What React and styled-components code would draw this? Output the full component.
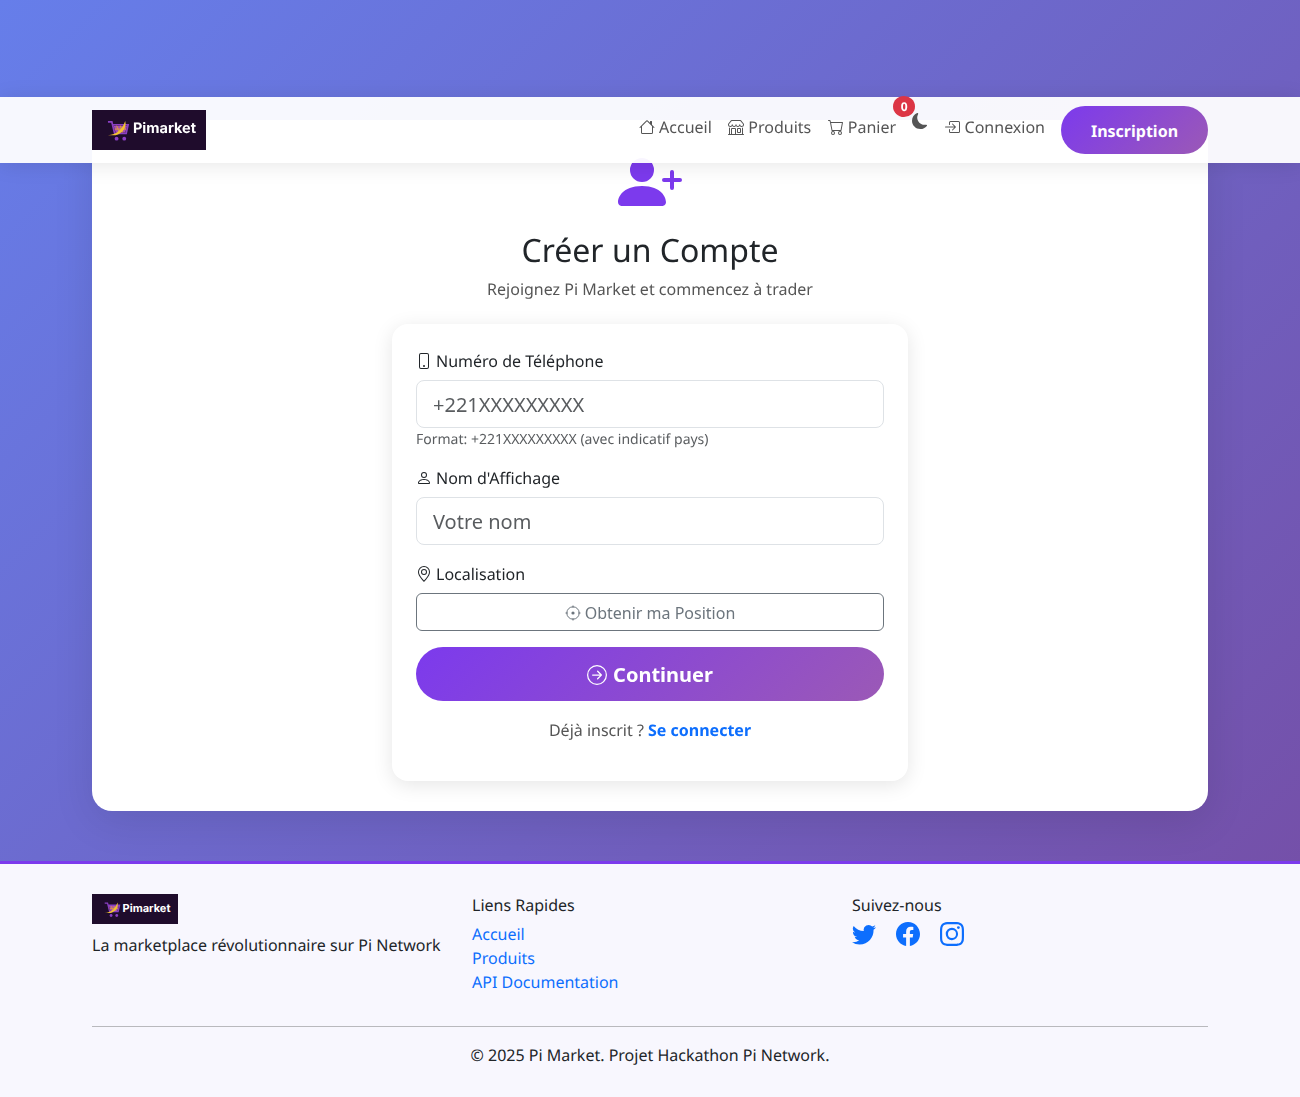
import React from "react";
import styled, { createGlobalStyle } from "styled-components";
import {
  BsHouse, BsShop, BsCart, BsMoonFill, BsBoxArrowInRight, BsPersonPlusFill, BsPhone,
  BsPerson, BsGeoAlt, BsArrowRightCircle, BsTwitter, BsFacebook, BsInstagram,
} from "react-icons/bs";

const Global = createGlobalStyle`
  * { box-sizing: border-box; }
  html, body { margin: 0; padding: 0; }
  body {
    font-family: "Noto Sans", sans-serif;
    font-size: 16px;
    line-height: 1.5;
    color: #212529;
    text-rendering: geometricPrecision;
    background: linear-gradient(135deg, #667eea 0%, #764ba2 100%);
  }
  #root { will-change: opacity; }
`;

const Hero = styled.main`
  position: relative;
  height: 861px;
  padding: 120px 92px 0;
`;

const Navbar = styled.header`
  position: absolute;
  z-index: 5;
  top: 97px;
  left: 0;
  right: 0;
  height: 66px;
  padding: 9px 92px;
  display: flex;
  justify-content: space-between;
  align-items: flex-start;
  background: rgba(255, 255, 255, 0.95);
  box-shadow: 0 2px 20px rgba(0, 0, 0, 0.1);
`;

const LogoBox = styled.div`
  display: flex;
  align-items: center;
  justify-content: center;
  gap: ${(p) => (p.$small ? 2 : 3)}px;
  width: ${(p) => (p.$small ? 86 : 114)}px;
  height: ${(p) => (p.$small ? 30 : 40)}px;
  margin-top: ${(p) => (p.$small ? 0 : 4)}px;
  padding-left: ${(p) => (p.$small ? 4 : 5)}px;
  background: #1f0c2c;
  color: #fff;
  font-family: "Inter", sans-serif;
  font-weight: 700;
  font-size: ${(p) => (p.$small ? 11 : 14.5)}px;
  line-height: 1;
  span { margin-bottom: 2px; }
`;

const Menu = styled.nav`
  display: flex;
  align-items: flex-start;
`;

const NavLink = styled.a`
  position: relative;
  display: flex;
  align-items: center;
  gap: 4.16px;
  height: 42px;
  padding: 0 8px;
  margin-right: ${(p) => p.$gap ?? 0.33}px;
  color: #555;
  white-space: nowrap;
  font-size: 16px;
  svg { flex: none; }
`;

const Badge = styled.span`
  position: absolute;
  top: -10px;
  right: -11px;
  width: 22px;
  height: 21px;
  border-radius: 50%;
  background: #dc3545;
  color: #fff;
  font-size: 12px;
  font-weight: 700;
  line-height: 21px;
  text-align: center;
`;

const ThemeToggle = styled.span`
  display: block;
  height: 42px;
  padding: 0 8px;
  color: #555;
  svg { display: block; margin-top: 7px; }
`;

const RegisterButton = styled.a`
  width: 147px;
  height: 48px;
  margin-left: 8px;
  border-radius: 24px;
  background: linear-gradient(135deg, #7c3aed 0%, #9b59b6 100%);
  color: #fff;
  font-weight: 700;
  text-align: center;
  line-height: 50px;
`;

const Card = styled.section`
  height: 691px;
  padding: 30px 0 0;
  border-radius: 20px;
  background: #fff;
  box-shadow: 0 10px 40px rgba(0, 0, 0, 0.1);
`;

const Head = styled.div`
  text-align: center;
`;

const HeadIcon = styled.div`
  height: 81px;
  color: #7c3aed;
  svg { display: block; margin: 0 auto; }
`;

const Title = styled.h2`
  margin: 0 0 7.5px;
  padding-top: 0.5px;
  font-size: 32px;
  font-weight: 400;
  line-height: 1.2;
`;

const Subtitle = styled.p`
  margin: 0 0 23px;
  color: #555;
`;

const FormCard = styled.form`
  width: 516px;
  margin: 0 auto;
  padding: 24px;
  border-radius: 16px;
  background: #fff;
  box-shadow: 0 4px 20px rgba(0, 0, 0, 0.1);
`;

const Field = styled.div`
  margin-bottom: 16px;
`;

const Label = styled.label`
  display: flex;
  align-items: center;
  gap: 4px;
  height: 24px;
  padding-top: 2px;
  margin-bottom: 8px;
`;

const TextInput = styled.input`
  display: block;
  width: 100%;
  height: 48px;
  padding: 8px 16px;
  border: 1px solid #dee2e6;
  border-radius: 8px;
  background: #fff;
  font: inherit;
  font-size: 20px;
  color: #212529;
  &::placeholder { color: rgba(33, 37, 41, 0.75); opacity: 1; }
`;

const Hint = styled.small`
  display: block;
  padding-top: 2px;
  font-size: 14px;
  line-height: 19px;
  color: rgba(33, 37, 41, 0.75);
`;

const OutlineButton = styled.button`
  display: flex;
  align-items: center;
  justify-content: center;
  gap: 4px;
  width: 100%;
  height: 38px;
  padding: 2px 0 0;
  border: 1px solid #6c757d;
  border-radius: 6px;
  background: transparent;
  color: #6c757d;
  font: inherit;
`;

const SubmitButton = styled.button`
  display: flex;
  align-items: center;
  justify-content: center;
  gap: 6px;
  width: 100%;
  height: 54px;
  padding: 2px 0 0;
  margin-bottom: 16px;
  border: 0;
  border-radius: 27px;
  background: linear-gradient(135deg, #7c3aed 0%, #9b59b6 100%);
  color: #fff;
  font: inherit;
  font-size: 20px;
  font-weight: 700;
`;

const LoginLine = styled.p`
  margin: 0 0 15px;
  padding-top: 1px;
  text-align: center;
  color: #555;
  a { color: #0d6efd; font-weight: 700; }
`;

const Footer = styled.footer`
  height: 236px;
  padding: 30px 92px 0;
  border-top: 3px solid #7c3aed;
  background: #f8f7fe;
`;

const FooterGrid = styled.div`
  display: grid;
  grid-template-columns: 380px 380px 356px;
  height: 133px;
  border-bottom: 1px solid #b9b9bd;
`;

const FooterText = styled.p`
  margin: 9px 0 0;
`;

const FooterTitle = styled.div`
  height: 24px;
  margin: -1px 0 5px;
  font-size: 16px;
`;

const FooterLink = styled.a`
  display: block;
  color: #0d6efd;
`;

const Socials = styled.div`
  display: flex;
  gap: 20px;
  margin-top: 5px;
  color: #0d6efd;
  svg { display: block; }
`;

const Copyright = styled.p`
  margin: 16px 0 0;
  text-align: center;
`;

function LogoMark({ size }) {
  return (
    <svg width={size} height={size} viewBox="0 0 24 24" fill="none">
      <path d="M1 3h4l3 12h12l2-9H6" stroke="#8a3fc4" strokeWidth="1.8" />
      <path d="M7 7h14l-2 7H9z" fill="#a64fb0" />
      <path d="M10 7l3 7M14 7l2 7M8 10.5h12" stroke="#e0a03a" strokeWidth="1" />
      <path d="M1 17C10 16 16 11 19 2c2 7-3 13-10 15z" fill="#f2c230" />
      <circle cx="10" cy="20.5" r="2" fill="#8a3fc4" />
      <circle cx="18" cy="20.5" r="2" fill="#8a3fc4" />
    </svg>
  );
}

function PositionIcon() {
  return (
    <svg width="16" height="16" viewBox="0 0 16 16" fill="none" stroke="currentColor">
      <circle cx="8" cy="8" r="6.2" />
      <path d="M8 .5v2.3M8 13.2v2.3M.5 8h2.3M13.2 8h2.3" />
      <circle cx="8" cy="8" r="1.6" fill="currentColor" stroke="none" />
    </svg>
  );
}

function Logo({ small }) {
  return (
    <LogoBox $small={small}>
      <LogoMark size={small ? 17 : 23} />
      <span>Pimarket</span>
    </LogoBox>
  );
}

export default function App() {
  return (
    <>
      <Global />
      <Hero>
        <Navbar>
          <Logo />
          <Menu>
            <NavLink><BsHouse size={16} />Accueil</NavLink>
            <NavLink><BsShop size={16} />Produits</NavLink>
            <NavLink><BsCart size={16} />Panier<Badge>0</Badge></NavLink>
            <ThemeToggle><BsMoonFill size={16} /></ThemeToggle>
            <NavLink $gap={0}><BsBoxArrowInRight size={16} />Connexion</NavLink>
            <RegisterButton>Inscription</RegisterButton>
          </Menu>
        </Navbar>
        <Card>
          <Head>
            <HeadIcon><BsPersonPlusFill size={64} /></HeadIcon>
            <Title>Créer un Compte</Title>
            <Subtitle>Rejoignez Pi Market et commencez à trader</Subtitle>
          </Head>
          <FormCard>
            <Field>
              <Label><BsPhone size={16} />Numéro de Téléphone</Label>
              <TextInput placeholder="+221XXXXXXXXX" />
              <Hint>Format: +221XXXXXXXXX (avec indicatif pays)</Hint>
            </Field>
            <Field>
              <Label><BsPerson size={16} />Nom d'Affichage</Label>
              <TextInput placeholder="Votre nom" />
            </Field>
            <Field>
              <Label><BsGeoAlt size={16} />Localisation</Label>
              <OutlineButton type="button"><PositionIcon />Obtenir ma Position</OutlineButton>
            </Field>
            <SubmitButton type="button"><BsArrowRightCircle size={20} />Continuer</SubmitButton>
            <LoginLine>Déjà inscrit ? <a>Se connecter</a></LoginLine>
          </FormCard>
        </Card>
      </Hero>
      <Footer>
        <FooterGrid>
          <div>
            <Logo small />
            <FooterText>La marketplace révolutionnaire sur Pi Network</FooterText>
          </div>
          <div>
            <FooterTitle>Liens Rapides</FooterTitle>
            <FooterLink>Accueil</FooterLink>
            <FooterLink>Produits</FooterLink>
            <FooterLink>API Documentation</FooterLink>
          </div>
          <div>
            <FooterTitle>Suivez-nous</FooterTitle>
            <Socials>
              <BsTwitter size={24} />
              <BsFacebook size={24} />
              <BsInstagram size={24} />
            </Socials>
          </div>
        </FooterGrid>
        <Copyright>© 2025 Pi Market. Projet Hackathon Pi Network.</Copyright>
      </Footer>
    </>
  );
}
